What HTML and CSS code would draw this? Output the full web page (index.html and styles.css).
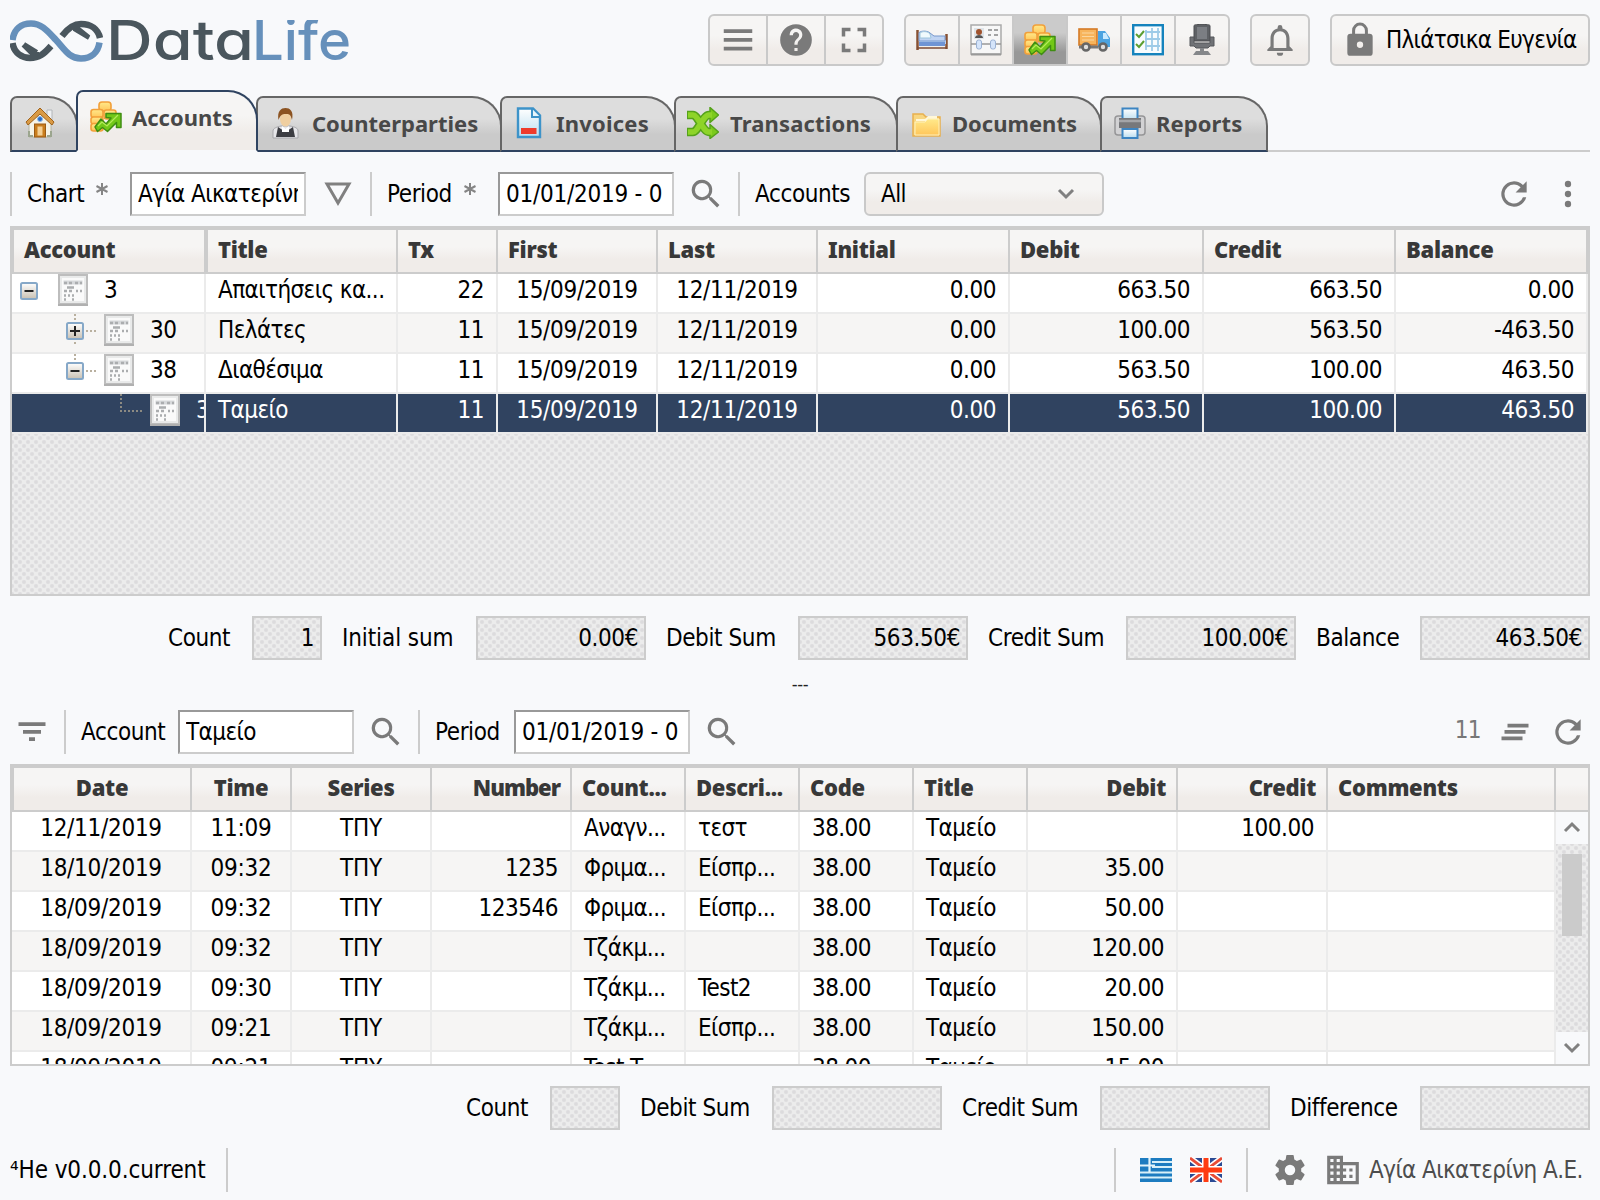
FILE: index.html
```html
<!DOCTYPE html>
<html lang="en">
<head>
<meta charset="utf-8">
<title>DataLife</title>
<link rel="stylesheet" href="styles.css">
</head>
<body>
<svg class="sprite" aria-hidden="true">
  <defs>
    <linearGradient id="gold" x1="0" y1="0" x2="0" y2="1"><stop offset="0" stop-color="#ffe98a"/><stop offset="1" stop-color="#ffc65a"/></linearGradient>
    <linearGradient id="ice" x1="0" y1="0" x2="0" y2="1"><stop offset="0" stop-color="#fff"/><stop offset="1" stop-color="#b9ddf0"/></linearGradient>
    <linearGradient id="knob" x1="0" y1="0" x2="0" y2="1"><stop offset="0" stop-color="#fff"/><stop offset="1" stop-color="#c8c0b2"/></linearGradient>
  </defs>
  <symbol id="menu" viewBox="0 0 24 24"><path d="M3 5.2h18v2.3H3zM3 10.8h18v2.3H3zM3 16.300h18v2.300H3z"/></symbol>
  <symbol id="help" viewBox="0 0 24 24"><path d="M12 2a10 10 0 1 0 0 20 10 10 0 0 0 0-20zm1 17h-2v-2h2zm2.070-7.750-.9.920C13.450 12.900 13 13.500 13 15h-2v-.5c0-1.100.450-2.100 1.170-2.830l1.240-1.260A2 2 0 1 0 10 9H8a4 4 0 1 1 7.070 2.250z"/></symbol>
  <symbol id="full" viewBox="0 0 24 24"><path d="M7 14H5v5h5v-2H7zM5 10h2V7h3V5H5zM17 17h-3v2h5v-5h-2zM14 5v2h3v3h2V5z"/></symbol>
  <symbol id="bell" viewBox="0 0 24 24"><path d="M12 22a2 2 0 0 0 2-2h-4a2 2 0 0 0 2 2zm6-6v-5c0-3.070-1.630-5.640-4.500-6.320V4a1.500 1.500 0 0 0-3 0v.68C7.640 5.360 6 7.920 6 11v5l-2 2v1h16v-1zm-2 1H8v-6c0-2.480 1.510-4.500 4-4.500s4 2.020 4 4.500z"/></symbol>
  <symbol id="lock" viewBox="0 0 24 24"><path d="M18 8h-1V6A5 5 0 0 0 7 6v2H6a2 2 0 0 0-2 2v10a2 2 0 0 0 2 2h12a2 2 0 0 0 2-2V10a2 2 0 0 0-2-2zm-6 9a2 2 0 1 1 0-4 2 2 0 0 1 0 4zm3.100-9H8.900V6a3.100 3.100 0 0 1 6.200 0z"/></symbol>
  <symbol id="refresh" viewBox="0 0 24 24"><path d="M17.650 6.350A8 8 0 1 0 19.730 14h-2.080A6 6 0 1 1 12 6c1.660 0 3.140.690 4.220 1.780L13 11h7V4z"/></symbol>
  <symbol id="more" viewBox="0 0 24 24"><circle cx="12" cy="5.700" r="2"/><circle cx="12" cy="12" r="2"/><circle cx="12" cy="18.300" r="2"/></symbol>
  <symbol id="search" viewBox="0 0 24 24"><path d="M15.500 14h-.8l-.3-.3A6.500 6.500 0 1 0 13.700 14.400l.3.300v.8l5 5L20.500 19zm-6 0a4.500 4.500 0 1 1 0-9 4.500 4.500 0 0 1 0 9z" fill-rule="evenodd"/></symbol>
  <symbol id="filter" viewBox="0 0 24 24"><path d="M10 18h4v-2.500h-4zM3 5.500V8h18V5.500zm3 7.700h12v-2.500H6z"/></symbol>
  <symbol id="clear" viewBox="0 0 24 24"><path d="M5 13.200h14v-2.500H5zm-2 4.300h14V15H3zM7 6.500V9h14V6.500z"/></symbol>
  <symbol id="funnel" viewBox="0 0 28 28"><path d="M3 4h22L14 23z" fill="none" stroke="#808080" stroke-width="3"/></symbol>
  <symbol id="down" viewBox="0 0 20 20"><path d="M3 6l7 7 7-7" fill="none" stroke="#808080" stroke-width="3"/></symbol>
  <symbol id="up" viewBox="0 0 20 20"><path d="M3 13l7-7 7 7" fill="none" stroke="#808080" stroke-width="3"/></symbol>
  <symbol id="gear" viewBox="0 0 24 24"><path d="M19.430 12.980a7.800 7.800 0 0 0 0-1.960l2.110-1.650a.5.5 0 0 0 .12-.64l-2-3.460a.5.5 0 0 0-.61-.22l-2.490 1a7.300 7.300 0 0 0-1.690-.98l-.38-2.650A.5.500 0 0 0 14 2h-4a.5.500 0 0 0-.49.420l-.38 2.650c-.61.250-1.170.590-1.690.980l-2.490-1a.5.500 0 0 0-.61.220l-2 3.460a.5.500 0 0 0 .12.640l2.110 1.650a7.900 7.900 0 0 0 0 1.960l-2.110 1.650a.5.500 0 0 0-.12.640l2 3.460c.12.220.39.300.61.220l2.490-1c.52.400 1.080.730 1.690.980l.38 2.650c.03.240.24.420.49.420h4c.25 0 .46-.18.490-.42l.38-2.650c.61-.25 1.170-.59 1.690-.98l2.490 1c.22.080.49 0 .61-.22l2-3.460a.5.500 0 0 0-.12-.64zM12 15.500a3.500 3.500 0 1 1 0-7 3.500 3.500 0 0 1 0 7z"/></symbol>
  <symbol id="domain" viewBox="0 0 24 24"><path d="M12 7V3H2v18h20V7zM6 19H4v-2h2zm0-4H4v-2h2zm0-4H4V9h2zm0-4H4V5h2zm4 12H8v-2h2zm0-4H8v-2h2zm0-4H8V9h2zm0-4H8V5h2zm10 12h-8v-2h2v-2h-2v-2h2v-2h-2V9h8zm-2-8h-2v2h2zm0 4h-2v2h2z"/></symbol>
  <symbol id="star" viewBox="0 0 14 14"><path d="M7 1v12M1.500 4l11 6M1.500 10l11-6" fill="none" stroke="#858585" stroke-width="2"/></symbol>

  <symbol id="coins" viewBox="0 0 32 32">
    <g fill="url(#gold)" stroke="#f2a03a" stroke-width="1.600"><rect x="9" y="1" width="12" height="9" rx="3"/><rect x="1" y="8.500" width="12" height="8" rx="2.500"/><rect x="14" y="9" width="12" height="9" rx="2.500"/><rect x="1" y="16" width="12" height="7" rx="2.500"/><rect x="1" y="22.500" width="12" height="7.500" rx="2.500"/></g>
    <path d="M5 26l6-8 5 5 5-6-5-.5v-4h15v14h-4.500v-5l-9 9-5-4-5 4z" fill="#72c818" stroke="#3f8d12" stroke-width="1.500" stroke-linejoin="round"/>
    <path d="M8 25l4-4 5 4 11-11" fill="none" stroke="#b4ea5a" stroke-width="1.300"/>
  </symbol>
  <symbol id="house" viewBox="0 0 32 32">
    <path d="M23 3h5v10h-5z" fill="#eef0f2" stroke="#b2b6ba"/>
    <path d="M5 14L16 4l11 10v16H5z" fill="#f5f3e6" stroke="#b5b4a4"/>
    <path d="M16 1L2 15l2 3L16 7l12 11 2-3z" fill="#d99a45" stroke="#a1631b"/>
    <circle cx="16" cy="12" r="2.500" fill="#2469c8" stroke="#8fb9e8"/>
    <rect x="10.500" y="17" width="11" height="13" fill="#c97d1c" stroke="#9b5b13"/><rect x="13.500" y="19.500" width="5" height="9" fill="#f4cf92"/>
    <path d="M5 24v5h4M23 29h4v-5" fill="none" stroke="#9ba58e" stroke-width="2"/>
  </symbol>
  <symbol id="waiter" viewBox="0 0 32 32">
    <path d="M3 31v-7c0-3 4-4 8-5h9c5 1 8 2 8 5v7z" fill="#e6e6e9" stroke="#a7a7ab"/>
    <path d="M6 30l2-10 7.500 5 7.500-5 2 10z" fill="#3c3d42"/><path d="M12 19l3.500 3 3.500-3v6h-7z" fill="#fff"/>
    <ellipse cx="15.500" cy="12" rx="5.500" ry="7.500" fill="#f0cfa0"/><path d="M8.500 13C7 4 11 1 15.500 1S24 4 22 13c-1-4-2-6-5-6s-6-1-8.500 6z" fill="#8c5321"/>
  </symbol>
  <symbol id="invoice" viewBox="0 0 32 32">
    <path d="M5 1.500h15l7 7V30H5z" fill="url(#ice)" stroke="#3d93c9" stroke-width="2.400"/><path d="M19 2v8h8" fill="#e7f6fc" stroke="#3d93c9" stroke-width="2"/><rect x="8" y="21" width="15.500" height="6" fill="#ee3b2c"/>
  </symbol>
  <symbol id="shuffle" viewBox="0 0 32 32">
    <g fill="none" stroke-linejoin="round"><path d="M0 8h6c5 0 10 17 16 17h2M0 25h6c5 0 10-17 16-17h2" stroke="#55a21b" stroke-width="8.500"/><path d="M23 .5l8.500 7.500-8.500 7.500zM23 17.500l8.500 7.500-8.500 6.500z" fill="#7bca1c" stroke="#55a21b" stroke-width="1.500"/><path d="M1 8h5c5 0 10 17 16 17h3M1 25h5c5 0 10-17 16-17h3" stroke="#8ed429" stroke-width="5.500"/></g>
  </symbol>
  <symbol id="folder" viewBox="0 0 32 32">
    <path d="M3 7h10l3 3h14v19H3z" fill="#f8d680" stroke="#e8b04e" stroke-width="1.500"/><path d="M6 12h9l3-3h9v5H6z" fill="#fff7d8"/><path d="M5 15h10l3-3h11v16H5z" fill="url(#gold)" stroke="#fff1bb"/>
  </symbol>
  <symbol id="printer" viewBox="0 0 32 32">
    <rect x="1" y="9" width="30" height="19" rx="3" fill="#d2d2d4" stroke="#959597" stroke-width="1.500"/><rect x="8.500" y="1.500" width="15" height="12" fill="url(#ice)" stroke="#3d85c2" stroke-width="2"/><rect x="5" y="11" width="22" height="10" fill="#77787b"/><rect x="8.500" y="22" width="15" height="9" fill="url(#ice)" stroke="#3d85c2" stroke-width="2"/><path d="M5 14h22" stroke="#a4a5a8" stroke-width="2.500"/>
  </symbol>
  <symbol id="bed" viewBox="0 0 32 32">
    <path d="M1.500 6v20M30.500 10v15" stroke="#875133" stroke-width="2.500"/><path d="M3 16h27v4H3z" fill="#b9d0f2"/><path d="M3 15V9c0-2 8-3 11 0l4 3h11v5H3z" fill="#bfd3f2" stroke="#7797cc"/><path d="M4 14V9c2-2 8-2 10 1l1 4z" fill="#f0fafd" stroke="#9ec5dc"/><path d="M3 18h26v4H3z" fill="#6f94d4"/><path d="M1 24h30" stroke="#7b4a35" stroke-width="1.500"/>
  </symbol>
  <symbol id="cards" viewBox="0 0 32 32">
    <rect x="1" y="1" width="30" height="29" fill="#f7f7f7" stroke="#aaa" stroke-width="1.500"/><path d="M1 30.500h30" stroke="#999" stroke-width="2"/><rect x="4" y="4" width="10" height="11" fill="#dfe4e8"/><path d="M5 14c0-4 8-4 8 0z" fill="#555"/><circle cx="9" cy="8" r="3" fill="#a0522d"/><path d="M18 6h4m2 0h4M18 11h3m3 0h4" stroke="#888" stroke-width="1.500"/><path d="M1 20h30" stroke="#999" stroke-width="1.500"/><rect x="6.500" y="16" width="5" height="9" rx="2" fill="#d4e4fa" stroke="#9bb2d4"/><rect x="20.500" y="16" width="5" height="9" rx="2" fill="#d4e4fa" stroke="#9bb2d4"/>
  </symbol>
  <symbol id="truck" viewBox="0 0 32 32">
    <rect x="1" y="5" width="18" height="16" fill="#f7b45c" stroke="#d47a26" stroke-width="1.600"/><path d="M4 9h12M4 12.500h12M4 16h12" stroke="#fad7a0"/><path d="M20 7h7l5 7v9H20z" fill="#4ba3e0"/><path d="M25 9h3l3 6h-6z" fill="#c9eaff"/><path d="M1 21.500h19v3H1z" fill="#777"/><g fill="#ddd" stroke="#666" stroke-width="2.600"><circle cx="8" cy="23" r="3.500"/><circle cx="25" cy="23" r="3.500"/></g>
  </symbol>
  <symbol id="sheet" viewBox="0 0 32 32">
    <rect x="1.200" y="1.200" width="29.600" height="29" fill="#f8fcfe" stroke="#1583bd" stroke-width="2.400"/><path d="M14 6v20M20 4v23M26 4v23M13 8h15M13 15h15M13 22h15" stroke="#9dcbe8" stroke-width="1.800"/><path d="M4 10l3 3 5-6M4 20l3 3 5-6" stroke="#5d9f32" stroke-width="2" fill="none"/>
  </symbol>
  <symbol id="chair" viewBox="0 0 32 32">
    <path d="M8 1.500C8 0 24 0 24 1.500V17H8z" fill="#5e6165" stroke="#4b4d50"/><path d="M11 3h10v12H11z" fill="#7b7e83"/><path d="M4 13h4v6h16v-6h4v9h-4l-2 2H10l-2-2H4z" fill="#707276" stroke="#55575a"/><path d="M14 24h4v3h4l3 4H7l3-4h4z" fill="#85878a"/>
  </symbol>
  <symbol id="greece" viewBox="0 0 32 26">
    <path d="M0 1h32v24H0z" fill="#1d7cc0"/><path d="M12 5h20M12 10h20M0 15.500h32M0 20.500h32" stroke="#d8f0f8" stroke-width="2"/><path d="M0 8.500h15M9.500 1v14" stroke="#e3f4fa" stroke-width="2.200"/>
  </symbol>
  <symbol id="britain" viewBox="0 0 32 26">
    <path d="M0 1h32v24H0z" fill="#2b4b94"/><path d="M0 1l32 24M32 1L0 25" stroke="#fff" stroke-width="6"/><path d="M0 1l32 24M32 1L0 25" stroke="#e84c36" stroke-width="2.800"/><path d="M16 1v24M0 13h32" stroke="#fff" stroke-width="8"/><path d="M16 1v24M0 13h32" stroke="#ff3c12" stroke-width="5"/>
  </symbol>
  <symbol id="ledger" viewBox="0 0 30 32">
    <rect x="1" y="1" width="28" height="29" fill="#e9eaea" stroke="#bdbdbd" stroke-width="2"/><path d="M0 31h30" stroke="#b0b0b0" stroke-width="2"/><rect x="4" y="4" width="22" height="23" fill="#fafafa"/><path d="M5.500 6.500h19v4h-19z" fill="#d6d8da"/><path d="M6 9h3m2 0h3m3 0h3m2 0h2M9 13.500h7M6 17h3m2 0h3m4 0h2m2 0h2M6 21.500h2m2 0h2m2 0h2M6 25.500h2m6 0h2" stroke="#abadaf" stroke-width="2.400"/>
  </symbol>
  <symbol id="minus" viewBox="0 0 18 18"><rect x="1" y="1" width="16" height="16" rx="1.500" fill="url(#knob)" stroke="#86a8c8" stroke-width="2"/><path d="M4.500 9h9" stroke="#222" stroke-width="2"/></symbol>
  <symbol id="plus" viewBox="0 0 18 18"><rect x="1" y="1" width="16" height="16" rx="1.500" fill="url(#knob)" stroke="#86a8c8" stroke-width="2"/><path d="M4 9h10M9 4v10" stroke="#222" stroke-width="2"/></symbol>
</svg>

<header class="top">
  <svg class="logo" viewBox="0 0 341 42" width="341" height="42">
    <g fill="none" stroke-width="6.500">
      <path d="M2.500 23C4 33 12 38 20 38c9 0 14-4 21-12M52 16C58 8 64 4 71 4c10 0 17 5 19 14" stroke="#4a565d"/>
      <path d="M13 25l9 9h7M14 24l13 8M79 17L69 9h-6M79 18L64 9" stroke="#4a565d" stroke-width="4"/>
      <path d="M2.500 20C4 9 11 3.500 21 3.500c11 0 17 8 25 16.500s13 18.500 25 18.500c10 0 17-6 18.500-16" stroke="#6690bb"/>
    </g>
    <text class="wordmark dark" x="96" y="40" textLength="148" lengthAdjust="spacingAndGlyphs">Data</text>
    <text class="wordmark blue" x="242" y="40" textLength="99" lengthAdjust="spacingAndGlyphs">Life</text>
  </svg>
  <div class="group g-tools">
    <span class="btn"><svg class="i38"><use href="#menu"/></svg></span>
    <span class="btn"><svg class="i38"><use href="#help"/></svg></span>
    <span class="btn"><svg class="i42"><use href="#full"/></svg></span>
  </div>
  <div class="group g-apps">
    <span class="btn"><svg class="i32"><use href="#bed"/></svg></span>
    <span class="btn"><svg class="i32"><use href="#cards"/></svg></span>
    <span class="btn on"><svg class="i32"><use href="#coins"/></svg></span>
    <span class="btn"><svg class="i32"><use href="#truck"/></svg></span>
    <span class="btn"><svg class="i32"><use href="#sheet"/></svg></span>
    <span class="btn"><svg class="i32"><use href="#chair"/></svg></span>
  </div>
  <div class="group g-bell"><span class="btn"><svg class="i38"><use href="#bell"/></svg></span></div>
  <div class="group g-user"><span class="btn"><svg class="i38"><use href="#lock"/></svg><span class="user">Πλιάτσικα Ευγενία</span></span></div>
</header>

<nav class="tabs">
  <div class="tab t-home"><svg class="i32"><use href="#house"/></svg></div>
  <div class="tab t-acc active"><svg class="i32"><use href="#coins"/></svg><span>Accounts</span></div>
  <div class="tab t-cp"><svg class="i32"><use href="#waiter"/></svg><span>Counterparties</span></div>
  <div class="tab t-inv"><svg class="i32"><use href="#invoice"/></svg><span>Invoices</span></div>
  <div class="tab t-tr"><svg class="i32"><use href="#shuffle"/></svg><span>Transactions</span></div>
  <div class="tab t-doc"><svg class="i32"><use href="#folder"/></svg><span>Documents</span></div>
  <div class="tab t-rep"><svg class="i32"><use href="#printer"/></svg><span>Reports</span></div>
  <div class="rest"></div>
</nav>

<div class="bar bar-one">
  <i class="sep"></i>
  <label class="l-chart">Chart</label><svg class="star"><use href="#star"/></svg>
  <div class="input"><span>Αγία Αικατερίνη</span></div>
  <svg class="fun"><use href="#funnel"/></svg>
  <i class="sep"></i>
  <label class="l-per">Period</label><svg class="star"><use href="#star"/></svg>
  <div class="input date"><span>01/01/2019 - 0</span></div>
  <svg class="i38 mag"><use href="#search"/></svg>
  <i class="sep"></i>
  <label class="l-accs">Accounts</label>
  <div class="select"><span>All</span><svg><use href="#down"/></svg></div>
  <div class="end"><svg class="i38"><use href="#refresh"/></svg><svg class="i38"><use href="#more"/></svg></div>
</div>

<section class="grid one">
  <div class="head">
    <b>Account</b><b>Title</b><b>Tx</b><b>First</b><b>Last</b><b>Initial</b><b>Debit</b><b>Credit</b><b>Balance</b>
  </div>
  <div class="row"><span class="tree"><svg class="knob"><use href="#minus"/></svg><svg class="doc"><use href="#ledger"/></svg><em>3</em></span><span>Απαιτήσεις κα...</span><span class="r">22</span><span class="c">15/09/2019</span><span class="c">12/11/2019</span><span class="r">0.00</span><span class="r">663.50</span><span class="r">663.50</span><span class="r">0.00</span></div>
  <div class="row alt"><span class="tree lv1"><svg class="knob"><use href="#plus"/></svg><svg class="doc"><use href="#ledger"/></svg><em>30</em></span><span>Πελάτες</span><span class="r">11</span><span class="c">15/09/2019</span><span class="c">12/11/2019</span><span class="r">0.00</span><span class="r">100.00</span><span class="r">563.50</span><span class="r">-463.50</span></div>
  <div class="row"><span class="tree lv1 last"><svg class="knob"><use href="#minus"/></svg><svg class="doc"><use href="#ledger"/></svg><em>38</em></span><span>Διαθέσιμα</span><span class="r">11</span><span class="c">15/09/2019</span><span class="c">12/11/2019</span><span class="r">0.00</span><span class="r">563.50</span><span class="r">100.00</span><span class="r">463.50</span></div>
  <div class="row sel"><span class="tree lv2"><i class="elbow"></i><svg class="doc"><use href="#ledger"/></svg><em>3</em></span><span>Ταμείο</span><span class="r">11</span><span class="c">15/09/2019</span><span class="c">12/11/2019</span><span class="r">0.00</span><span class="r">563.50</span><span class="r">100.00</span><span class="r">463.50</span></div>
  <div class="void dither"></div>
</section>

<div class="sums">
  <label class="w84">Count</label><div class="field dither small">1</div>
  <label class="w134 initial">Initial sum</label><div class="field dither">0.00€</div>
  <label class="w132">Debit Sum</label><div class="field dither">563.50€</div>
  <label class="w138">Credit Sum</label><div class="field dither">100.00€</div>
  <label class="w104">Balance</label><div class="field dither">463.50€</div>
</div>

<div class="splitter">---</div>

<div class="bar bar-two">
  <svg class="i36 filt"><use href="#filter"/></svg>
  <i class="sep"></i>
  <label class="l-acc">Account</label>
  <div class="input"><span>Ταμείο</span></div>
  <svg class="i38 mag"><use href="#search"/></svg>
  <i class="sep"></i>
  <label class="l-per2">Period</label>
  <div class="input date"><span>01/01/2019 - 0</span></div>
  <svg class="i38 mag"><use href="#search"/></svg>
  <div class="end"><span class="num">11</span><svg class="i36"><use href="#clear"/></svg><svg class="i38"><use href="#refresh"/></svg></div>
</div>

<section class="grid two">
  <div class="head">
    <b class="c">Date</b><b class="c">Time</b><b class="c">Series</b><b class="r tight">Number</b><b>Count...</b><b>Descri...</b><b>Code</b><b>Title</b><b class="r">Debit</b><b class="r">Credit</b><b>Comments</b><b></b>
  </div>
  <div class="body">
    <div class="rows">
      <div class="row"><span class="c">12/11/2019</span><span class="c">11:09</span><span class="c">ΤΠΥ</span><span></span><span>Αναγν...</span><span>τεστ</span><span>38.00</span><span>Ταμείο</span><span class="r"></span><span class="r">100.00</span><span></span></div>
      <div class="row alt"><span class="c">18/10/2019</span><span class="c">09:32</span><span class="c">ΤΠΥ</span><span class="r">1235</span><span>Φριμα...</span><span>Είσπρ...</span><span>38.00</span><span>Ταμείο</span><span class="r">35.00</span><span></span><span></span></div>
      <div class="row"><span class="c">18/09/2019</span><span class="c">09:32</span><span class="c">ΤΠΥ</span><span class="r">123546</span><span>Φριμα...</span><span>Είσπρ...</span><span>38.00</span><span>Ταμείο</span><span class="r">50.00</span><span></span><span></span></div>
      <div class="row alt"><span class="c">18/09/2019</span><span class="c">09:32</span><span class="c">ΤΠΥ</span><span></span><span>Τζάκμ...</span><span></span><span>38.00</span><span>Ταμείο</span><span class="r">120.00</span><span></span><span></span></div>
      <div class="row"><span class="c">18/09/2019</span><span class="c">09:30</span><span class="c">ΤΠΥ</span><span></span><span>Τζάκμ...</span><span>Test2</span><span>38.00</span><span>Ταμείο</span><span class="r">20.00</span><span></span><span></span></div>
      <div class="row alt"><span class="c">18/09/2019</span><span class="c">09:21</span><span class="c">ΤΠΥ</span><span></span><span>Τζάκμ...</span><span>Είσπρ...</span><span>38.00</span><span>Ταμείο</span><span class="r">150.00</span><span></span><span></span></div>
      <div class="row"><span class="c">18/09/2019</span><span class="c">09:21</span><span class="c">ΤΠΥ</span><span></span><span>Test T...</span><span></span><span>38.00</span><span>Ταμείο</span><span class="r">15.00</span><span></span><span></span></div>
    </div>
    <div class="scroll dither">
      <span class="arrow"><svg><use href="#up"/></svg></span>
      <div class="thumb"></div>
      <span class="arrow"><svg><use href="#down"/></svg></span>
    </div>
  </div>
</section>

<div class="sums sums-two">
  <label class="w84">Count</label><div class="field dither small"></div>
  <label class="w132">Debit Sum</label><div class="field dither"></div>
  <label class="w138">Credit Sum</label><div class="field dither"></div>
  <label class="w130">Difference</label><div class="field dither"></div>
</div>

<footer class="status">
  <span class="ver">⁴He v0.0.0.current</span><i class="sep"></i>
  <div class="end">
    <i class="sep"></i>
    <svg class="flag"><use href="#greece"/></svg><svg class="flag"><use href="#britain"/></svg>
    <i class="sep s2"></i>
    <svg class="i36 cog"><use href="#gear"/></svg><svg class="i38"><use href="#domain"/></svg>
    <span class="org">Αγία Αικατερίνη Α.Ε.</span>
  </div>
</footer>
</body>
</html>
```
FILE: styles.css
```css
* { box-sizing: border-box; }
body {
  margin: 0; padding: 14px 10px 0; width: 1600px; height: 1200px; overflow: hidden;
  background: #f8f9fb; color: #000;
  font-family: "DejaVu Sans Condensed", "DejaVu Sans", sans-serif;
  font-stretch: condensed; font-size: 24px; letter-spacing: -0.58px; white-space: nowrap;
  display: flex; flex-direction: column;
}
.sprite { position: absolute; width: 0; height: 0; }
svg { fill: #7a7a7a; flex: none; display: block; }
label { letter-spacing: -0.4px; }
.i32 { width: 32px; height: 32px; }
.i36 { width: 36px; height: 36px; }
.i38 { width: 38px; height: 38px; }
.i42 { width: 42px; height: 42px; }

/* header */
.top { display: flex; height: 52px; }
.logo { margin: 6px 357px 0 0; }
.wordmark { font-family: Inter, Lato, sans-serif; font-size: 55px; font-weight: 500; letter-spacing: 0; font-feature-settings: "cv11"; }
.dark { fill: #4a565d; }
.blue { fill: #6690bb; }
.group { display: flex; border: 2px solid #c9c9c9; border-radius: 6px; background: linear-gradient(#f6f5f4 40%, #f0ece9 70%); overflow: hidden; }
.btn { flex: 1; display: flex; align-items: center; justify-content: center; }
.btn + .btn { border-left: 2px solid #c9c9c9; }
.btn.on { background: linear-gradient(#cbcbcb 35%, #989898 75%); }
.g-tools { width: 176px; margin-right: 20px; }
.g-apps { width: 326px; margin-right: 20px; }
.g-bell { width: 60px; margin-right: 20px; }
.g-user { width: 260px; }
.g-user .btn { justify-content: flex-start; padding-left: 9px; }
.user { margin-left: 7px; letter-spacing: -0.7px; }

/* tabs */
.tabs { display: flex; align-items: flex-end; height: 62px; margin-top: 24px; font: bold 22px "Noto Sans", sans-serif; letter-spacing: 0; color: #484848; }
.tab { position: relative; height: 56px; margin-left: -2px; display: flex; align-items: center; padding: 0 0 2px 14px; border: 2px solid #666; border-bottom-color: #2f4360; border-radius: 7px 30px 0 0; background: linear-gradient(#ddd 40%, #cacaca 70%); }
.tab span { line-height: 1; }
.t-home { width: 68px; margin-left: 0; }
.t-home .i32 { margin-left: -2px; }
.tab.active { width: 182px; height: 62px; padding: 0 0 8px 12px; border-color: #2f4360; border-bottom-color: #f8f9fb; background: linear-gradient(#f6f5f4 40%, #f0ece9 70%); z-index: 1; }
.t-acc span { margin-left: 10px; }
.t-cp { width: 246px; padding-left: 12px; }
.t-cp span { margin-left: 10px; }
.t-inv { width: 176px; padding-left: 11px; }
.t-inv span { margin-left: 11px; letter-spacing: 0.2px; }
.t-tr { width: 224px; padding-left: 11px; }
.t-tr span { margin-left: 11px; letter-spacing: 0.15px; }
.t-doc { width: 206px; padding-left: 12px; }
.t-doc span { margin-left: 10px; }
.t-rep { width: 168px; padding-left: 12px; }
.t-rep span { margin-left: 10px; letter-spacing: 0.1px; }
.rest { flex: 1; height: 2px; background: #ccc; }

/* toolbars */
.bar { display: flex; height: 44px; align-items: center; }
.bar-one { margin-top: 20px; }
.sep { width: 2px; height: 44px; background: #ccc; flex: none; }
.star { width: 14px; height: 14px; margin-top: -10px; }
.l-chart { width: 83px; padding-left: 15px; }
.l-chart + .star { margin-right: 21px; }
.input { width: 176px; height: 44px; background: #fff; border: 2px solid #ccc; border-top-color: #999; border-left-color: #999; padding: 0 6px; display: flex; align-items: center; }
.input span { width: 100%; overflow: hidden; }
.input.date { letter-spacing: -0.25px; }
.fun { width: 28px; height: 28px; margin: 0 18px; }
.l-per { width: 91px; padding-left: 15px; }
.l-per + .star { margin-right: 21px; }
.mag { margin: 0 13px 0 13px; }
.l-accs { width: 124px; padding-left: 15px; }
.select { width: 240px; height: 44px; border: 2px solid #c9c9c9; border-radius: 6px; background: linear-gradient(#f6f5f4 40%, #f0ece9 70%); display: flex; align-items: center; justify-content: space-between; padding: 0 26px 0 15px; }
.select svg, .arrow svg { width: 20px; height: 20px; }
.end { margin-left: auto; display: flex; align-items: center; }
.bar-one .end { gap: 16px; margin-right: 3px; }

/* data grids */
.grid { border: 2px solid #ccc; border-top-width: 4px; }
.one { height: 370px; margin-top: 10px; }
.head { display: grid; height: 44px; border-bottom: 2px solid #ccc; background: linear-gradient(#f6f5f4 40%, #f0ece9 70%); font: bold 22px/39px "Noto Sans", sans-serif; letter-spacing: -0.3px; color: #383838; }
.head b { padding: 0 10px; border-right: 2px solid #ccc; overflow: hidden; }
.head b:first-child { border-left: 2px solid #ccc; }
.head .tight { letter-spacing: -1px; }
.one .head { grid-template-columns: 196px 190px 100px 160px 160px 192px 194px 192px 192px; }
.one .head b:first-child { border-right-width: 4px; }
.row { display: grid; height: 40px; background: #fff; line-height: 33px; }
.row > span { padding: 0 12px; border-right: 2px solid #ebebeb; border-bottom: 2px solid #ebebeb; overflow: hidden; min-width: 0; }
.one .row { grid-template-columns: 194px 192px 100px 160px 160px 192px 194px 192px 192px; }
.row.alt { background: #f6f5f4; }
.row.sel { background: #304360; color: #fff; }
.c { text-align: center; }
.row .c { letter-spacing: -0.28px; }
.r { text-align: right; }
.row .r { letter-spacing: -0.48px; }
.row > .tree { display: flex; align-items: flex-start; padding: 0 0 0 8px; }
.knob { width: 18px; height: 18px; margin-top: 8px; }
.doc { width: 30px; height: 32px; margin-left: 20px; }
.tree em { font-style: normal; margin-left: 16px; }
.row > .tree.lv1 { padding-left: 54px; background: repeating-linear-gradient(90deg, #b9b09f 0 2px, transparent 2px 4px) 74px 16px / 11px 2px no-repeat, repeating-linear-gradient(#b9b09f 0 2px, transparent 2px 4px) 62px 0 / 2px 30px no-repeat; }
.row > .tree.lv1.last { background: repeating-linear-gradient(90deg, #b9b09f 0 2px, transparent 2px 4px) 74px 16px / 11px 2px no-repeat, repeating-linear-gradient(#b9b09f 0 2px, transparent 2px 4px) 62px 0 / 2px 8px no-repeat; }
.row > .tree.lv2 { padding-left: 108px; }
.elbow { flex: none; width: 22px; height: 18px; background: repeating-linear-gradient(90deg, #8c8a82 0 2px, transparent 2px 4px) 0 16px / 22px 2px no-repeat, repeating-linear-gradient(#8c8a82 0 2px, transparent 2px 4px) 0 0 / 2px 18px no-repeat; }
.lv2 .doc { margin-left: 8px; }
.dither { background-color: #ececec; background-image: radial-gradient(circle, #dcdbdd 1.3px, transparent 2.6px), radial-gradient(circle, #dcdbdd 1.3px, transparent 2.6px); background-size: 8px 8px; background-position: 0 0, 4px 4px; }
.void { height: 160px; }

/* totals */
.sums { display: flex; height: 44px; margin-top: 20px; justify-content: flex-end; align-items: center; }
.field { width: 170px; height: 44px; border: 2px solid #ccc; text-align: right; line-height: 41px; padding-right: 6px; margin-right: 20px; letter-spacing: -0.4px; }
.field:last-child { margin-right: 0; }
.field.small { width: 70px; }
.w84 { width: 84px; }
.w134 { width: 134px; }
.w132 { width: 132px; }
.w138 { width: 138px; }
.w104 { width: 104px; }
.w130 { width: 130px; }
.initial { letter-spacing: -0.1px; }
.splitter { height: 50px; line-height: 47px; text-align: center; font-size: 18px; letter-spacing: -0.3px; color: #222; }

/* transactions panel */
.filt { margin: 0 14px 0 4px; }
.l-acc { width: 112px; padding-left: 15px; }
.bar-two .mag { margin: 0 13px 0 13px; }
.l-per2 { width: 94px; padding-left: 15px; }
.num { color: #777; margin: -4px 16px 0 0; }
.bar-two .end .i38 { margin-left: 16px; }
.bar-two .end { margin-right: 3px; }
.two { height: 302px; margin-top: 10px; }
.two .head { grid-template-columns: 180px 100px 140px 140px 114px 114px 114px 114px 150px 150px 228px 32px; }
.two .head b:last-child { border-right: 0; }
.two .row { grid-template-columns: 180px 100px 140px 140px 114px 114px 114px 114px 150px 150px 228px; }
.body { display: flex; height: 252px; overflow: hidden; }
.rows { width: 1544px; }
.scroll { width: 32px; display: flex; flex-direction: column; align-items: center; }
.arrow { width: 32px; height: 32px; background: #f8f9fb; display: flex; align-items: center; justify-content: center; }
.thumb { width: 20px; height: 82px; margin: 10px 0 96px; background: #cbcbcb; }

/* status bar */
.status { display: flex; align-items: center; height: 44px; margin-top: 18px; }
.ver { width: 216px; letter-spacing: -0.1px; }
.flag { width: 32px; height: 26px; margin-right: 18px; }
.status .end .sep { margin-right: 24px; }
.status .end .s2 { margin: 0 24px 0 6px; }
.cog { margin-right: 16px; }
.org { width: 221px; margin-left: 7px; color: #4d4d4d; }
```
